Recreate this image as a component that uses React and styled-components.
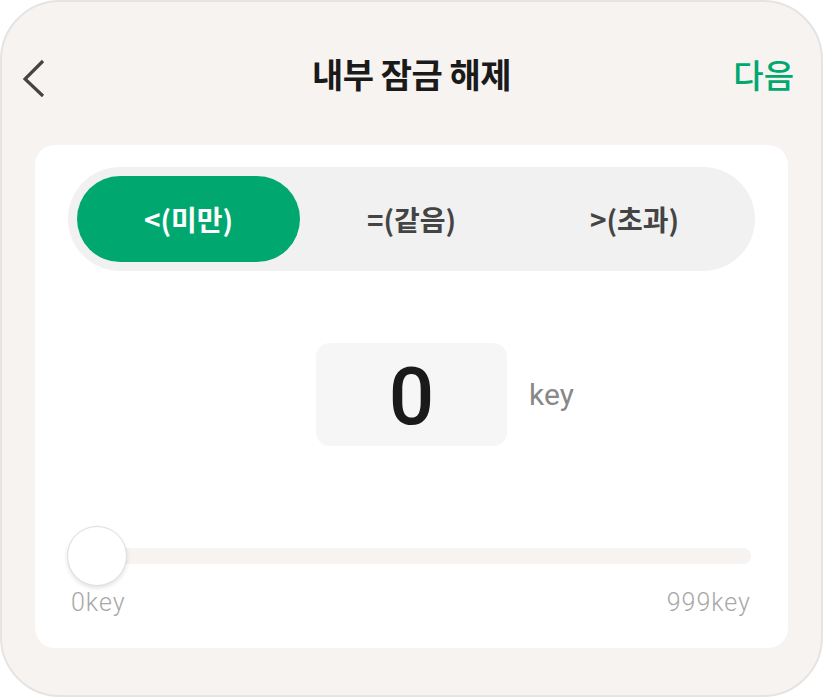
import React, { useState } from 'react'
import styled, { createGlobalStyle } from 'styled-components'

const GlobalStyle = createGlobalStyle`
  html, body {
    margin: 0;
    padding: 0;
    background: #ffffff;
  }
  body {
    font-family: "Noto Sans CJK KR", "Noto Sans", sans-serif;
  }
`

const Frame = styled.div`
  box-sizing: border-box;
  width: 823px;
  height: 697px;
  border: 2px solid #e6e4e2;
  border-radius: 60px;
  background: #f6f3f0;
  display: flex;
  flex-direction: column;
  padding: 0 33px 0 33px;
  overflow: hidden;
`

const Header = styled.div`
  height: 143px;
  display: flex;
  align-items: center;
  justify-content: space-between;
  position: relative;
  box-sizing: border-box;
`

const BackButton = styled.button`
  border: none;
  background: none;
  padding: 0;
  margin-left: -12px;
  margin-top: 11px;
  width: 24px;
  height: 40px;
  display: flex;
  align-items: center;
  cursor: pointer;
`

const Title = styled.h1`
  position: absolute;
  left: 0;
  right: 0;
  margin: 0;
  text-align: center;
  font-size: 34px;
  font-weight: 700;
  color: #1a1a1a;
  pointer-events: none;
  letter-spacing: -0.5px;
`

const NextButton = styled.button`
  border: none;
  background: none;
  padding: 0;
  margin-right: -6px;
  font-family: inherit;
  font-size: 33px;
  font-weight: 500;
  color: #00a870;
  cursor: pointer;
`

const Card = styled.div`
  background: #ffffff;
  border-radius: 20px;
  height: 503px;
  padding: 22px 33px 0 33px;
  box-sizing: border-box;
  display: flex;
  flex-direction: column;
`

const Segment = styled.div`
  background: #f1f1f1;
  border-radius: 52px;
  height: 104px;
  padding: 9px;
  box-sizing: border-box;
  display: grid;
  grid-template-columns: repeat(3, 1fr);
`

const SegmentItem = styled.button`
  border: none;
  border-radius: 44px;
  background: ${({ active }) => (active ? '#00a870' : 'transparent')};
  color: ${({ active }) => (active ? '#ffffff' : '#444444')};
  font-family: inherit;
  font-size: 28px;
  font-weight: 600;
  cursor: pointer;
`

const ValueRow = styled.div`
  margin-top: 72px;
  display: flex;
  align-items: center;
  justify-content: center;
  position: relative;
`

const ValueBox = styled.div`
  width: 191px;
  height: 103px;
  border-radius: 14px;
  background: #f6f6f6;
  display: flex;
  align-items: center;
  justify-content: center;
  font-family: Roboto, "Noto Sans", sans-serif;
  font-size: 80px;
  font-weight: 500;
  color: #1a1a1a;
  line-height: 1;
  padding-top: 4px;
  box-sizing: border-box;
`

const Unit = styled.span`
  position: absolute;
  left: 461px;
  font-size: 30px;
  color: #888888;
  font-family: Roboto, "Noto Sans", sans-serif;
`

const SliderArea = styled.div`
  margin-top: 80px;
  margin-right: 4px;
  display: flex;
  flex-direction: column;
`

const Track = styled.div`
  height: 60px;
  position: relative;
  display: flex;
  align-items: center;
`

const TrackBar = styled.div`
  flex: 1;
  height: 16px;
  margin-left: 12px;
  border-radius: 8px;
  background: #f6f3f0;
`

const Thumb = styled.div`
  position: absolute;
  left: -1px;
  top: 0;
  width: 58px;
  height: 58px;
  border-radius: 50%;
  background: #ffffff;
  border: 1px solid #dedede;
  box-shadow: 0 2px 4px rgba(0, 0, 0, 0.12);
`

const RangeLabels = styled.div`
  display: flex;
  justify-content: space-between;
  margin-top: 2px;
  padding-left: 3px;
  font-family: Roboto, "Noto Sans", sans-serif;
  font-size: 25px;
  font-weight: 300;
  letter-spacing: 1px;
  color: #a8a8a8;
`

const options = ['<(미만)', '=(같음)', '>(초과)']

export default function App() {
  const [selected, setSelected] = useState(0)
  return (
    <>
      <GlobalStyle />
      <Frame>
        <Header>
          <BackButton aria-label="뒤로">
            <svg width="22" height="40" viewBox="0 0 22 40">
              <path d="M20 2 L2 20 L20 37" fill="none" stroke="#444" strokeWidth="3.2" />
            </svg>
          </BackButton>
          <Title>내부 잠금 해제</Title>
          <NextButton>다음</NextButton>
        </Header>
        <Card>
          <Segment>
            {options.map((label, i) => (
              <SegmentItem key={label} active={i === selected} onClick={() => setSelected(i)}>
                {label}
              </SegmentItem>
            ))}
          </Segment>
          <ValueRow>
            <ValueBox>0</ValueBox>
            <Unit>key</Unit>
          </ValueRow>
          <SliderArea>
            <Track>
              <TrackBar />
              <Thumb />
            </Track>
            <RangeLabels>
              <span>0key</span>
              <span>999key</span>
            </RangeLabels>
          </SliderArea>
        </Card>
      </Frame>
    </>
  )
}
